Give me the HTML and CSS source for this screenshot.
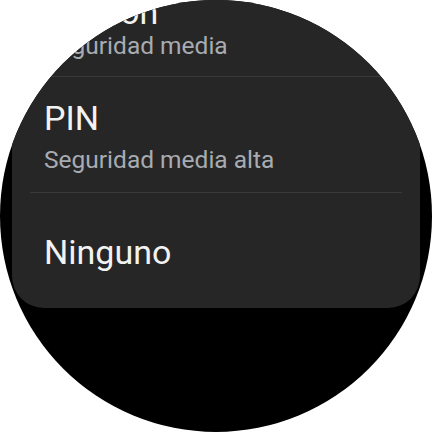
FILE: index.html
```html
<!DOCTYPE html>
<html lang="es">
<head>
<meta charset="utf-8">
<link rel="stylesheet" href="styles.css">
</head>
<body>
<div class="screen">
  <div class="card">
    <div class="row row-top">
      <div class="title">Patrón</div>
      <div class="sub">Seguridad media</div>
    </div>
    <div class="divider"></div>
    <div class="row row-pin">
      <div class="title">PIN</div>
      <div class="sub">Seguridad media alta</div>
    </div>
    <div class="divider"></div>
    <div class="row row-none">
      <div class="title">Ninguno</div>
    </div>
  </div>
</div>
</body>
</html>
```
FILE: styles.css
```css
html, body {
  margin: 0;
  padding: 0;
  background: #ffffff;
}
.screen {
  width: 432px;
  height: 432px;
  border-radius: 50%;
  overflow: hidden;
  background: #000000;
  font-family: Roboto, "Noto Sans", sans-serif;
}
.card {
  margin: -8px 12px 0;
  background: #262626;
  border-radius: 0 0 32px 32px;
}
.row {
  padding: 0 32px;
}
.title {
  font-size: 34px;
  line-height: 40px;
  color: #f2f2f2;
}
.sub {
  font-size: 24.5px;
  line-height: 30px;
  color: #a8acb2;
}
.row-top {
  padding-bottom: 15px;
}
.row-top .title {
  margin-left: 14px;
}
.row-top .sub {
  margin-top: -1px;
}
.row-pin {
  padding-top: 21px;
  padding-bottom: 17px;
}
.row-pin .sub {
  margin-top: 7px;
}
.row-none {
  padding-top: 39px;
  padding-bottom: 36px;
}
.divider {
  height: 1px;
  margin: 0 18px;
  background: #3a3a3a;
}
```
